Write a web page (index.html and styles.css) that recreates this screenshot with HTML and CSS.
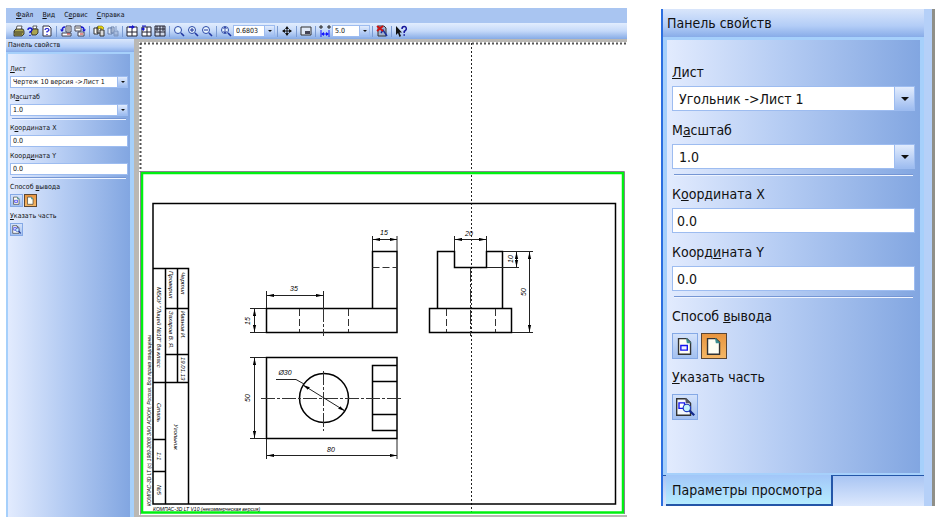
FILE: index.html
```
<!DOCTYPE html>
<html lang="ru">
<head>
<meta charset="utf-8">
<title>КОМПАС-3D LT</title>
<link rel="stylesheet" href="styles.css">
</head>
<body>
<svg class="defs" aria-hidden="true">
  <defs>
    <symbol id="i-printer" viewBox="0 0 12 12"><path d="M4 1h5l-1 4H3z" fill="#fff" stroke="#222" stroke-width=".7"/><path d="M1 6l2-2h7l1 2v3l-2 2H1z" fill="#aaa450" stroke="#222" stroke-width=".8"/><path d="M1 7h9M2 9h7" stroke="#222" stroke-width=".8"/></symbol>
    <symbol id="i-printer-q" viewBox="0 0 12 12"><path d="M6 1h4l-1 3H6z" fill="#fff" stroke="#222" stroke-width=".7"/><path d="M4 6l2-2h5v4l-2 2H5z" fill="#aaa450" stroke="#222" stroke-width=".8"/><path d="M1 5q0-2 2-2t2 2q0 1-2 2v1M3 10v1" fill="none" stroke="#1414d0" stroke-width="1.4"/></symbol>
    <symbol id="i-page-q" viewBox="0 0 12 12"><path d="M2 1h6l2 2v8H2z" fill="#fff" stroke="#334"/><path d="M4 5q0-1.500 2-1.500t2 1.500q0 1-2 1.500v1M6 9v1" fill="none" stroke="#1414d0" stroke-width="1.200"/></symbol>
    <symbol id="i-rot-l" viewBox="0 0 12 12"><path d="M6 1h5v6H6zM2 8h9v3H2z" fill="#fff" stroke="#445"/><path d="M7 3h3M7 5h3" stroke="#555"/><path d="M5 2q-3 0-3 4" fill="none" stroke="#1414d0" stroke-width="1.300"/><path d="M0 4.500h4L2 7z" fill="#1414d0"/><path d="M7 9h3" stroke="#c22"/></symbol>
    <symbol id="i-rot-r" viewBox="0 0 12 12"><path d="M1 1h6v5H1zM4 7h6v4H4z" fill="#fff" stroke="#445"/><path d="M2 3h4" stroke="#555"/><path d="M7 2q3 0 3 3" fill="none" stroke="#1414d0" stroke-width="1.300"/><path d="M8 4.500h4L10 7z" fill="#1414d0"/><path d="M6 9h3" stroke="#c22"/></symbol>
    <symbol id="i-copy" viewBox="0 0 12 12"><path d="M1 3h4v6H1zM4 2h4v6H4z" fill="#fff" stroke="#333"/><path d="M7 5h4v6H7z" fill="#ddd" stroke="#333"/><path d="M5 1h4l2 2-2 2-1-2-3 1z" fill="#e8d40c" stroke="#665c00" stroke-width=".5"/></symbol>
    <symbol id="i-copy-off" viewBox="0 0 12 12"><path d="M1 3h4v6H1zM4 2h3v6H4z" fill="#dce6f6" stroke="#667fa8"/><path d="M7 6h4v5H7z" fill="#a9bddf" stroke="#7e96c0"/><path d="M9 1v4M7 10h4" stroke="#7e96c0"/></symbol>
    <symbol id="i-grid-a" viewBox="0 0 12 12"><path d="M1 2h10v9H1zM6 2v9M1 7h10" fill="#fff" stroke="#223"/><path d="M3 2h4" stroke="#1414d0" stroke-width="1.500"/><path d="M6 0l3 2-3 2z" fill="#1414d0"/></symbol>
    <symbol id="i-grid-b" viewBox="0 0 12 12"><path d="M2 2h9v9H2zM7 2v9M2 7h9" fill="#fff" stroke="#223"/><path d="M2 1h4M2 4h3" stroke="#1414d0"/><path d="M4 2L1 4l3 2z" fill="#1414d0"/></symbol>
    <symbol id="i-grid-c" viewBox="0 0 12 12"><path d="M1 1h10v10H1zM6 1v10M1 7h10M1 4h10" fill="#cfd8e8" stroke="#223"/><path d="M3 1v5M9 1v5" stroke="#223"/></symbol>
    <symbol id="i-lens" viewBox="0 0 12 12"><circle cx="5" cy="5" r="3.500" fill="#e9f6ff" stroke="#2b49a8"/><path d="M8 8l3 3" stroke="#2036a0" stroke-width="1.600"/></symbol>
    <symbol id="i-plus" viewBox="0 0 12 12"><use href="#i-lens"/><path d="M3 5h4M5 3v4" stroke="#1a2f98"/></symbol>
    <symbol id="i-minus" viewBox="0 0 12 12"><use href="#i-lens"/><path d="M3 5h4" stroke="#1a2f98"/></symbol>
    <symbol id="i-scale" viewBox="0 0 12 12"><use href="#i-lens"/><path d="M5 2v6M3.500 4L5 2l1.500 2M3.500 6L5 8l1.500-2" fill="none" stroke="#1a2f98" stroke-width=".8"/></symbol>
    <symbol id="i-move" viewBox="0 0 12 12"><path d="M6 2v8M2 6h8" stroke="#111"/><path d="M6 1l2 3H4zM6 11l2-3H4zM1 6l3-2v4zM11 6L8 4v4z" fill="#111"/></symbol>
    <symbol id="i-corner" viewBox="0 0 12 12"><path d="M1 2h10v8H1z" fill="#dfe8f6" stroke="#333"/><path d="M5 6h5v3H5z" fill="#445"/></symbol>
    <symbol id="i-span" viewBox="0 0 12 12"><path d="M0 2h4M8 2h4M2 0v4M10 0v4" stroke="#222"/><path d="M2 5v7M10 5v7M3 9h6" stroke="#1414ff"/><path d="M2 9l3-2v4zM10 9L7 7v4z" fill="#1414ff"/></symbol>
    <symbol id="i-close" viewBox="0 0 12 12"><path d="M2 1h6l2 2v8H2z" fill="#9fb0cf" stroke="#333"/><path d="M5 8l2-3 2 3 2 3" fill="none" stroke="#1a2f98" stroke-width="1.400"/><path d="M1 1l6 5M7 1L1 6" stroke="#d01010" stroke-width="1.800"/></symbol>
    <symbol id="i-help" viewBox="0 0 12 12"><path d="M1 1v9l2-2 1.500 4 1.500-1-1.500-3.500H7z" fill="#111"/><path d="M7 4q0-2.500 2.200-2.500T11.300 4Q11.300 5.200 9.200 6.500V8M9.200 9.200v1.600" fill="none" stroke="#14149a" stroke-width="1.500"/></symbol>
    <symbol id="i-sheet-part" viewBox="0 0 26 26"><path d="M6 5h9l4 4v13H6z" fill="#fffff4" stroke="#333" stroke-width="1.500"/><path d="M14 4l6 6h-5z" fill="#3c8f8f"/><path d="M8.500 12.500h7v5h-7z" fill="#eef" stroke="#1414f0" stroke-width="1.500"/></symbol>
    <symbol id="i-sheet" viewBox="0 0 26 26"><path d="M6 5h9l4 4v13H6z" fill="#fffff4" stroke="#333" stroke-width="1.500"/><path d="M14 4l6 6h-5z" fill="#3c8f8f"/></symbol>
    <symbol id="i-pick" viewBox="0 0 26 26"><path d="M4 4h10l5 5v13H4z" fill="#f4f8fc" stroke="#333" stroke-width="1.500"/><path d="M13 3l6 6h-5z" fill="#556"/><path d="M6.500 8.500h6v6h-6z" fill="#fff" stroke="#1414f0" stroke-width="1.500"/><circle cx="15" cy="14" r="4" fill="#c5f2fb" stroke="#1f3bbd" stroke-width="1.300"/><path d="M18 17l5 5" stroke="#142a8c" stroke-width="2.500"/></symbol>
  </defs>
</svg>

<main class="window">
  <nav class="menu">
    <a href="#file"><u>Ф</u>айл</a><a href="#view"><u>В</u>ид</a><a href="#service">С<u>е</u>рвис</a><a href="#help"><u>С</u>правка</a>
  </nav>
  <div class="toolbar">
    <button aria-label="Печать"><svg><use href="#i-printer"/></svg></button>
    <button aria-label="Настройка печати"><svg><use href="#i-printer-q"/></svg></button>
    <button aria-label="Параметры"><svg><use href="#i-page-q"/></svg></button>
    <i class="sep"></i>
    <button aria-label="Повернуть влево"><svg><use href="#i-rot-l"/></svg></button>
    <button aria-label="Повернуть вправо"><svg><use href="#i-rot-r"/></svg></button>
    <i class="sep"></i>
    <button aria-label="Добавить"><svg><use href="#i-copy"/></svg></button>
    <button aria-label="Удалить" disabled><svg><use href="#i-copy-off"/></svg></button>
    <i class="sep"></i>
    <button aria-label="Сдвинуть вправо"><svg><use href="#i-grid-a"/></svg></button>
    <button aria-label="Сдвинуть влево"><svg><use href="#i-grid-b"/></svg></button>
    <button aria-label="Сетка листов"><svg><use href="#i-grid-c"/></svg></button>
    <i class="sep"></i>
    <button aria-label="Увеличить рамкой"><svg><use href="#i-lens"/></svg></button>
    <button aria-label="Увеличить"><svg><use href="#i-plus"/></svg></button>
    <button aria-label="Уменьшить"><svg><use href="#i-minus"/></svg></button>
    <i class="sep"></i>
    <button aria-label="Масштаб"><svg><use href="#i-scale"/></svg></button>
    <span class="combo combo-zoom"><select aria-label="Текущий масштаб"><option>0.6803</option></select></span>
    <i class="sep"></i>
    <button aria-label="Сдвинуть"><svg><use href="#i-move"/></svg></button>
    <i class="sep"></i>
    <button aria-label="Показать всё"><svg><use href="#i-corner"/></svg></button>
    <i class="sep"></i>
    <button aria-label="Шаг"><svg><use href="#i-span"/></svg></button>
    <span class="combo combo-step"><select aria-label="Шаг курсора"><option>5.0</option></select></span>
    <i class="sep"></i>
    <button aria-label="Завершить просмотр"><svg><use href="#i-close"/></svg></button>
    <i class="sep"></i>
    <button aria-label="Справка"><svg><use href="#i-help"/></svg></button>
  </div>
  <div class="content">
    <section class="panel panel-small">
      <h2>Панель свойств</h2>
      <form class="fields">
        <label for="s-sheet"><u>Л</u>ист</label>
        <span class="combo"><select id="s-sheet"><option>Чертеж 10 версия -&gt;Лист 1</option></select></span>
        <label for="s-scale">М<u>а</u>сштаб</label>
        <span class="combo"><select id="s-scale"><option>1.0</option></select></span>
        <hr>
        <label for="s-x">К<u>о</u>ордината X</label>
        <input id="s-x" type="text" value="0.0">
        <label for="s-y">Коорд<u>и</u>ната Y</label>
        <input id="s-y" type="text" value="0.0">
        <hr>
        <span class="caption">Способ <u>в</u>ывода</span>
        <div class="modes">
          <button type="button" aria-label="Часть листа"><svg><use href="#i-sheet-part"/></svg></button>
          <button type="button" class="on" aria-label="Весь лист"><svg><use href="#i-sheet"/></svg></button>
        </div>
        <span class="caption"><u>У</u>казать часть</span>
        <div class="modes">
          <button type="button" aria-label="Указать часть"><svg><use href="#i-pick"/></svg></button>
        </div>
      </form>
    </section>
    <div class="workspace">
      <svg class="sheet" viewBox="139 42 488 473" preserveAspectRatio="xMinYMin meet" role="img" aria-label="Чертёж: Угольник">
        <defs>
          <marker id="arrow" viewBox="0 0 7 4" refX="7" refY="2" markerWidth="7" markerHeight="4" markerUnits="userSpaceOnUse" orient="auto-start-reverse"><path d="M0 .4L7 2 0 3.600z"/></marker>
        </defs>
        <path class="dots" d="M140 43.500H627M140.500 43V172"/>
        <path class="dots-thin" d="M471.500 43V515"/>
        <path d="M140.500 514.500V171.500H624.500V514" fill="none" stroke="#b060b8"/>
        <rect x="142" y="173" width="481" height="339.500" fill="none" stroke="#00f010" stroke-width="2.500"/>

        <g class="main-line">
          <path d="M153 203.500H615.500V504H153z"/>
          <path d="M153 268.500H188.500V504M165.500 268.500V504M177.500 268.500V382.500M165.500 308.500H188.500M165.500 354.500H188.500M153 382.500H188.500M153 439.500H165.500M153 471.500H165.500"/>
          <path d="M266.500 308.500H372.500V251.500H397V332.500H266.500zM372.500 308.500H397"/>
          <path d="M266.500 357.500H397V438.500H266.500zM397 365.500H372.500V430.500H397M372.500 381.500H397M372.500 414.500H397"/>
          <circle cx="324" cy="398" r="24.500"/>
          <path d="M437.500 308.500V251.500H454.500V267.500H486.500V251.500H502.500V308.500M429.500 308.500H511.500V332.500H429.500z"/>
        </g>
        <g class="hidden-line">
          <path d="M372.500 267.500H397M299.500 309V332M348.500 309V332M446.500 309V332M495.500 309V332"/>
        </g>
        <g class="axis">
          <path d="M323.500 308V336M261 398.500H402M323.500 371V431M470.500 268V336"/>
        </g>
        <g class="thin">
          <path d="M372.500 251V236M397 251V236M266.500 308V291M323.500 308V291M266 308.500H250M266 332.500H250M266 357.500H250M266 438.500H250M266.500 439V459M397 439V459M454.500 251V236M486.500 251V236M503 251.500H533M487 267.500H519M512 332.500H533"/>
          <path d="M276 379.500H296L304 384"/>
          <g class="dim">
            <path d="M373 239.500H397"/><path d="M267 295.500H323"/><path d="M254.500 309V332"/><path d="M254.500 358V438"/><path d="M267 455.500H397"/><path d="M455 239.500H486"/><path d="M516.500 252V267"/><path d="M529.500 252V332"/><path d="M303 385L345 411"/>
          </g>
        </g>
        <g class="dims">
          <text x="384" y="235">15</text>
          <text x="294" y="291">35</text>
          <text x="285" y="375">Ø30</text>
          <text x="331" y="452">80</text>
          <text x="469" y="236">20</text>
          <text transform="translate(250 321) rotate(-90)">15</text>
          <text transform="translate(250 398) rotate(-90)">50</text>
          <text transform="translate(513 259) rotate(-90)">10</text>
          <text transform="translate(526 292) rotate(-90)">50</text>
        </g>
        <g class="stamp">
          <text transform="translate(181 272) rotate(90)">Чертил</text>
          <text transform="translate(169 271) rotate(90)">Проверил</text>
          <text transform="translate(181 311) rotate(90)">Иванов И.</text>
          <text transform="translate(169 311) rotate(90)">Захаров В. Я.</text>
          <text transform="translate(181 357) rotate(90)">19.01.13</text>
          <text transform="translate(157 287) rotate(90)">МБОУ "Лицей №10" 8а класс</text>
          <text transform="translate(157 403) rotate(90)">Сталь</text>
          <text transform="translate(157 452) rotate(90)">1:1</text>
          <text transform="translate(157 485) rotate(90)">№5</text>
          <text transform="translate(174 424) rotate(90)">Угольник</text>
        </g>
        <g class="notice">
          <text transform="translate(151 506) rotate(-90)">КОМПАС-3D LT (c) 1989-2008 ЗАО АСКОН, Россия. Все права защищены</text>
          <text x="153" y="511">КОМПАС-3D LT V10 (некоммерческая версия)</text>
        </g>
      </svg>
    </div>
  </div>
</main>

<aside class="panel panel-large">
  <h2>Панель свойств</h2>
  <form class="fields">
    <label for="l-sheet"><u>Л</u>ист</label>
    <span class="combo"><select id="l-sheet"><option>Угольник -&gt;Лист 1</option></select></span>
    <label for="l-scale">М<u>а</u>сштаб</label>
    <span class="combo"><select id="l-scale"><option>1.0</option></select></span>
    <hr>
    <label for="l-x">К<u>о</u>ордината X</label>
    <input id="l-x" type="text" value="0.0">
    <label for="l-y">Коорд<u>и</u>ната Y</label>
    <input id="l-y" type="text" value="0.0">
    <hr>
    <span class="caption">Способ <u>в</u>ывода</span>
    <div class="modes">
      <button type="button" aria-label="Часть листа"><svg><use href="#i-sheet-part"/></svg></button>
      <button type="button" class="on" aria-label="Весь лист"><svg><use href="#i-sheet"/></svg></button>
    </div>
    <span class="caption"><u>У</u>казать часть</span>
    <div class="modes">
      <button type="button" aria-label="Указать часть"><svg><use href="#i-pick"/></svg></button>
    </div>
  </form>
  <div class="tabs"><button type="button">Параметры просмотра</button></div>
</aside>
</body>
</html>
```
FILE: styles.css
```
* { box-sizing: border-box; }

body {
  margin: 0;
  padding: 8px 8px 6px 6px;
  min-height: 100vh;
  display: grid;
  grid-template-columns: minmax(0, 621fr) minmax(0, 274fr);
  gap: 34px;
  background: #fff;
  color: #111;
  font-family: "DejaVu Sans Condensed", "Noto Sans", sans-serif;
  font-size: 7px;
}

.defs { position: absolute; width: 0; height: 0; }

button, select, input { font: inherit; color: inherit; margin: 0; border-radius: 0; }
button { padding: 0; border: 0; background: none; }
u { text-underline-offset: 1px; }

/* main window */
.window {
  display: flex;
  flex-direction: column;
  background: #a9c5f1;
}

.menu {
  display: flex;
  gap: 9px;
  padding: 0 10px;
  height: 15px;
  line-height: 15px;
}
.menu a { color: inherit; text-decoration: none; }

.toolbar {
  display: flex;
  align-items: center;
  height: 16px;
  padding-left: 6px;
  background: linear-gradient(#e2edfe, #c5d9f9 50%, #86abe6);
}
.toolbar button { width: 14px; height: 14px; padding: 1px; }
.toolbar svg { display: block; width: 12px; height: 12px; }
.sep { width: 1px; height: 11px; margin: 0 2px; background: #7b9bd2; }

.combo { position: relative; display: block; }
.combo select {
  display: block;
  width: 100%;
  height: var(--field);
  padding: 0 0 0 var(--inset);
  border: 1px solid #9dbcf0;
  background: #fff;
  appearance: none;
}
.combo::before {
  content: "";
  position: absolute;
  inset: 1px 1px 1px auto;
  width: var(--arrow-box);
  background: linear-gradient(#e2ecfd, #9dbcf0);
  border-left: 1px solid #9dbcf0;
  pointer-events: none;
}
.combo::after {
  content: "";
  position: absolute;
  right: calc(var(--arrow-box) / 2 + 1px - var(--tip));
  top: 50%;
  border: var(--tip) solid transparent;
  border-top-color: #111;
  border-bottom: 0;
  transform: translateY(-50%);
  pointer-events: none;
}
.toolbar .combo { --field: 12px; --inset: 2px; --arrow-box: 9px; --tip: 2px; }
.combo-zoom { width: 42px; }
.combo-step { width: 38px; }

.content { flex: 1; display: flex; min-height: 0; }

.workspace {
  flex: 1;
  min-width: 0;
  display: grid;
  padding: 3px 0 2px 5px;
  background: #bab8b4;
}
.sheet { width: 100%; height: 100%; min-height: 0; background: #fff; }

/* property panel */
.panel { display: flex; flex-direction: column; background: #b5d0f8; }
.panel h2 {
  margin: 0;
  font: inherit;
  height: var(--head);
  line-height: var(--head);
  padding-left: var(--head-inset);
  background: linear-gradient(#d9e6fb, #b3cdf7 60%, #88ace8);
}
.fields {
  flex: 1;
  border-style: solid;
  border-color: #a6d0fb;
  background: linear-gradient(90deg, #e2ebfe, #b5ccf3 45%, #82a6e1) padding-box;
}
.fields label, .caption { display: block; height: var(--line); line-height: var(--line); }
.fields input {
  display: block;
  width: 100%;
  height: var(--field);
  padding: 0 0 0 var(--input-inset);
  border: 1px solid #9dbcf0;
  background: #fff;
}
.fields hr { height: var(--rule); border: 0; margin: 0 var(--rule); background: linear-gradient(#7596d4 50%, #eef4ff 50%); }
.modes { display: flex; gap: var(--mode-gap); }
.modes button { width: var(--mode); height: var(--mode); border: 1px solid #85a9e6; background: linear-gradient(#d3e2fb, #a3c0f0); }
.modes .on { border-color: #5b4634; background: linear-gradient(#e8953f, #f5b765); }
.modes svg { display: block; width: 100%; height: 100%; }

.panel-small {
  --head: 13px; --head-inset: 2px; --line: 10px; --field: 12px; --inset: 2px;
  --input-inset: 2px; --arrow-box: 9px; --tip: 2px; --rule: 2px; --mode: 13px; --mode-gap: 1px;
  width: 128px;
}
.panel-small .fields { border-width: 2px 4px 0 2px; padding: 10px 2px 0; }
.panel-small .combo, .panel-small input { margin: 2px 0 4px; }
.panel-small hr { margin-top: -2px; margin-bottom: 3px; }
.panel-small .modes { margin: 2px 0 4px; }

.panel-large {
  --head: 28px; --head-inset: 4px; --line: 20px; --field: 25px; --inset: 6px;
  --input-inset: 4px; --arrow-box: 19px; --tip: 4px; --rule: 2px; --mode: 26px; --mode-gap: 3px;
  margin: 1px 0 11px;
  padding-right: 8px;
  border-left: 2px solid #2c6fe0;
  border-right: 3px solid #8f8f88;
  font-size: 14px;
}
.panel-large .fields { border-width: 3px 4px 2px 4px; padding: 22px 5px 0; }
.panel-large .combo, .panel-large input { margin: 4px 0 9px; }
.panel-large hr { margin-top: -4px; margin-bottom: 8px; }
.panel-large .modes { margin: 7px 0 8px; }

.tabs {
  display: flex;
  height: 31px;
  border-top: 1px solid #2456a8;
  background: linear-gradient(#a9c5f3, #dce8fd);
}
.tabs button {
  margin: -1px 0 0 3px;
  padding: 0 8px 0 6px;
  border-right: 2px solid #2456a8;
  border-bottom: 2px solid #2456a8;
  background: linear-gradient(#a2c6f8, #b5ecff);
}

/* drawing */
.sheet path, .sheet circle { fill: none; }
.sheet marker path { fill: #000; stroke: none; }
.sheet .dots { stroke: #555; stroke-width: 2; stroke-dasharray: 2 2; }
.sheet .dots-thin { stroke: #222; stroke-width: 1; stroke-dasharray: 2 2; }
.main-line { fill: none; stroke: #000; stroke-width: 1.500; }
.hidden-line { stroke: #333; stroke-width: 1; stroke-dasharray: 7 3; }
.axis { stroke: #333; stroke-width: 1; stroke-dasharray: 14 2 3 2; }
.thin { stroke: #222; stroke-width: 1; }
.dim path { marker-start: url(#arrow); marker-end: url(#arrow); }
.dims, .stamp, .notice { font-family: "Liberation Sans Narrow", "Liberation Sans", sans-serif; font-style: italic; }
.dims { font-size: 7px; text-anchor: middle; }
.stamp { font-size: 6px; }
.notice { font-size: 5px; }
```
